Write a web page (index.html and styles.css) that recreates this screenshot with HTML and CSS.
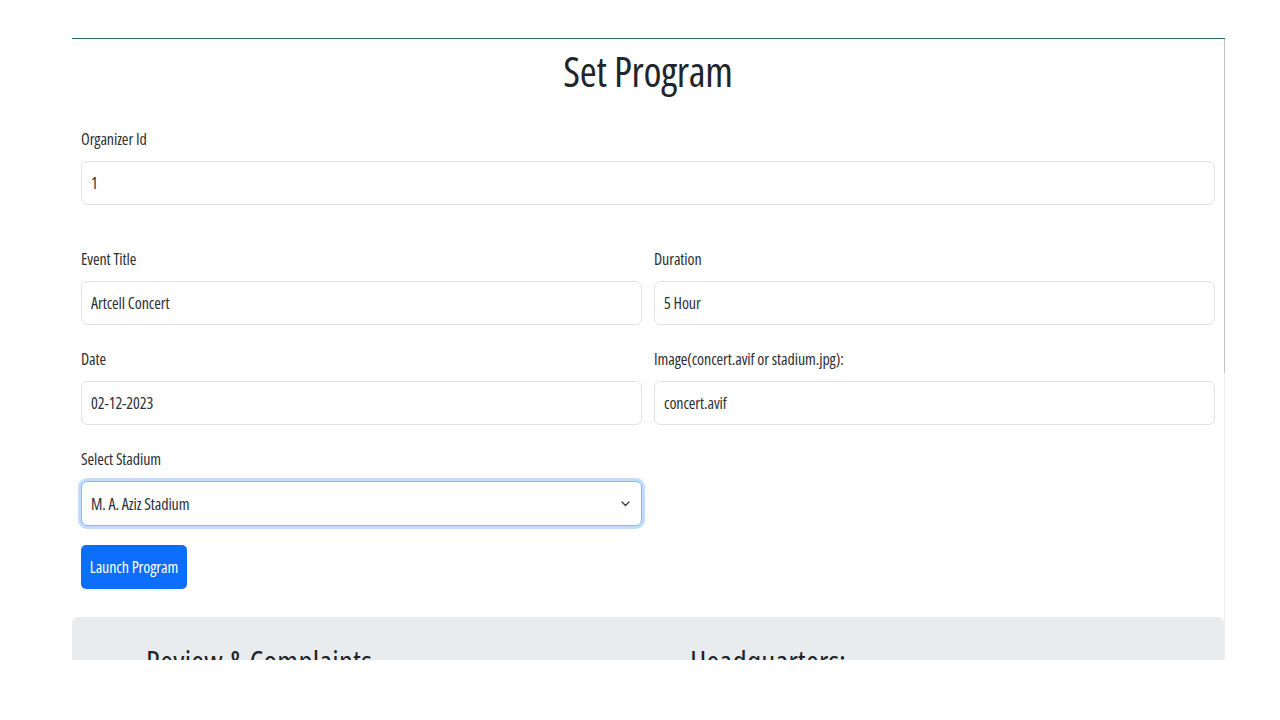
FILE: index.html
```html
<!DOCTYPE html>
<html lang="en">
<head>
<meta charset="utf-8">
<title>Set Program</title>
<link rel="stylesheet" href="styles.css">
</head>
<body>
<div class="page">
  <main class="panel">
    <h1 class="title">Set Program</h1>
    <form class="form">
      <div class="field full">
        <label class="label">Organizer Id</label>
        <input class="control" type="text" value="1">
      </div>
      <div class="grid">
        <div class="field">
          <label class="label">Event Title</label>
          <input class="control" type="text" value="Artcell Concert">
        </div>
        <div class="field">
          <label class="label">Duration</label>
          <input class="control" type="text" value="5 Hour">
        </div>
        <div class="field">
          <label class="label">Date</label>
          <input class="control" type="text" value="02-12-2023">
        </div>
        <div class="field">
          <label class="label">Image(concert.avif or stadium.jpg):</label>
          <input class="control" type="text" value="concert.avif">
        </div>
        <div class="field">
          <label class="label">Select Stadium</label>
          <div class="select-wrap">
            <div class="control select focus">M. A. Aziz Stadium</div>
            <svg class="chev" width="9" height="6" viewBox="0 0 9 6"><path d="M1 1l3.5 3.5L8 1" fill="none" stroke="#343a40" stroke-width="1.3" stroke-linecap="round" stroke-linejoin="round"/></svg>
          </div>
        </div>
      </div>
      <button type="button" class="btn">Launch Program</button>
    </form>
    <footer class="footer">
      <h2 class="foot-h review">Review &amp; Complaints</h2>
      <h2 class="foot-h hq">Headquarters:</h2>
    </footer>
  </main>
</div>
</body>
</html>
```

FILE: styles.css
```css
html, body {
  margin: 0;
  padding: 0;
  background: #ffffff;
  height: 720px;
  overflow: hidden;
}
body {
  font-family: "Open Sans", "Noto Sans", sans-serif;
  font-stretch: 75%;
  font-weight: 400;
  color: #2b2f33;
}
.page {
  padding-top: 38px;
  padding-left: 72px;
  height: 622px;
  overflow: hidden;
}
.panel {
  width: 1153px;
  border-top: 1px solid #2a6b4a;
  background:
    linear-gradient(to bottom, #c2c2c2 334px, #efefef 334px) right top / 1px 100% no-repeat;
  box-sizing: border-box;
  padding-right: 1px;
  height: 640px;
  display: flex;
  flex-direction: column;
}
.title {
  margin: 6px 0 0 0;
  text-align: center;
  font-size: 41px;
  font-weight: 400;
  line-height: 52px;
  letter-spacing: -0.3px;
  color: #212529;
}
.form {
  padding: 0 9px;
  display: flex;
  flex-direction: column;
}
.field {
  display: flex;
  flex-direction: column;
}
.full {
  margin-top: 30px;
  margin-bottom: 42px;
}
.label {
  font-size: 16px;
  line-height: 24px;
  margin-bottom: 10px;
  letter-spacing: -0.1px;
}
.grid {
  display: grid;
  grid-template-columns: 1fr 1fr;
  column-gap: 12px;
  row-gap: 22px;
}
.control {
  box-sizing: border-box;
  height: 44px;
  border: 1px solid #dee2e6;
  border-radius: 6px;
  padding: 0 9px;
  font-family: inherit;
  font-stretch: 75%;
  font-weight: 400;
  font-size: 16px;
  color: #2b2f33;
  background: #fff;
  letter-spacing: -0.1px;
  outline: none;
  width: 100%;
}
.select-wrap {
  position: relative;
}
.select {
  display: flex;
  align-items: center;
  height: 45px;
}
.focus {
  border-color: #86b7fe;
  box-shadow: 0 0 0 3px rgba(13, 110, 253, 0.25);
}
.chev {
  position: absolute;
  right: 12px;
  top: 20px;
}
.btn {
  align-self: flex-start;
  margin-top: 19px;
  height: 44px;
  width: 106px;
  padding: 0;
  border: 0;
  border-radius: 5px;
  background: #0d6efd;
  color: #fff;
  font-family: inherit;
  font-stretch: 75%;
  font-weight: 400;
  font-size: 16px;
  letter-spacing: -0.1px;
}
.footer {
  margin-top: 28px;
  background: #e9ecef;
  border-radius: 6px 6px 0 0;
  height: 80px;
  display: flex;
}
.foot-h {
  margin: 0;
  font-size: 31px;
  font-weight: 500;
  line-height: 36px;
  margin-top: 26px;
  letter-spacing: 0.2px;
  color: #212529;
}
.review {
  margin-left: 74px;
  width: 544px;
}
.hq {
  margin-left: 0;
}
```
